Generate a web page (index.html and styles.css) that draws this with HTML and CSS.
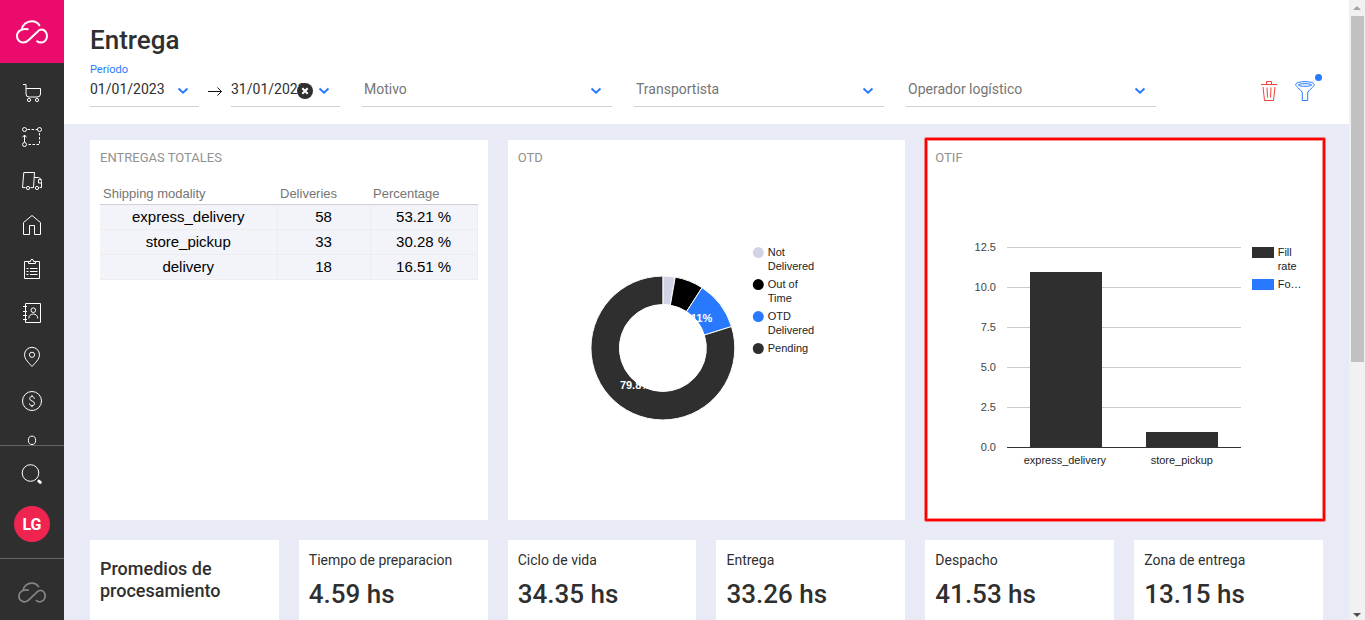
FILE: index.html
```html
<!DOCTYPE html>
<html lang="es">
<head>
<meta charset="utf-8">
<title>Entrega</title>
<meta name="viewport" content="width=device-width, initial-scale=1">
<link rel="stylesheet" href="styles.css">
</head>
<body>
<svg class="defs" aria-hidden="true">
  <symbol id="cloud" viewBox="0 0 32 24">
    <path d="M11.7 9.2C5 8.2 1 11.8 1 16.2c0 3.600 2.800 6.400 6.400 6.400 2.500 0 3.900-1 5.600-2.800L21 12.200c1.300-1.400 2.500-2.600 4.500-2.600 3.200 0 5.500 2.900 5.500 6.400s-2.500 6.600-5.900 6.600c-1.600 0-3-.4-4-1.300"/>
    <path d="M5.800 9.600C6.400 4.600 10.800 1.200 15.800 1.200c3.200 0 6 1.400 7.600 4.100"/>
  </symbol>
  <symbol id="chevron" viewBox="0 0 12 8"><path d="M1.500 1.500 6 5.700l4.500-4.200"/></symbol>
</svg>

<aside class="sidebar">
  <a class="brand" href="#" aria-label="Inicio"><svg class="cloud"><use href="#cloud"/></svg></a>
  <nav class="nav">
    <a href="#" aria-label="Pedidos"><svg class="icon" viewBox="0 0 24 24"><path d="M3 3.500h3v9.500q0 3 3 3h8q3.500 0 3.500-3V7.500H6"/><circle cx="9" cy="19" r="1.600"/><circle cx="17" cy="19" r="1.600"/></svg></a>
    <a href="#" aria-label="Rutas"><svg class="icon" viewBox="0 0 24 24"><circle cx="4.500" cy="4.500" r="2"/><circle cx="19.500" cy="4.500" r="2"/><circle cx="4.500" cy="19.500" r="2"/><path d="M7.500 4.500h10M19.500 8v11.500H7.500" stroke-dasharray="2.500 1.500"/><path d="M4.500 17v-7M2.500 12.300l2-2.300 2 2.300"/></svg></a>
    <a href="#" aria-label="Transporte"><svg class="icon" viewBox="0 0 24 24"><path d="M5.500 18.600h-3L3.800 3.500h10.700l-1 15.100H10.500M14.200 8.500h4.300q2.700.5 3 4v6.100h-2M21.500 10.600h-3v3.400h3"/><circle cx="8" cy="19" r="1.600"/><circle cx="17" cy="19" r="1.600"/></svg></a>
    <a href="#" aria-label="Sucursales"><svg class="icon" viewBox="0 0 24 24"><path d="M3.500 9.500 12 2.500l8.500 7v12H14.500v-9h-5v9h-6z"/></svg></a>
    <a href="#" aria-label="Tareas"><svg class="icon" viewBox="0 0 24 24"><path d="M8.500 4.500h-4v17h15v-17h-4M8.500 6.500v-2h2q0-2.200 1.500-2.200t1.500 2.200h2v2zM6.500 11.500h2M6.500 14.500h2M6.500 17.500h2M10 11.500h7.500M10 14.500h7.500M10 17.500h7.500"/></svg></a>
    <a href="#" aria-label="Contactos"><svg class="icon" viewBox="0 0 24 24"><path d="M5.500 2.500h15v19h-15zM3 5.500h4M3 10.500h4M3 14.500h4M3 18.500h4M8.800 17.500c0-6 9-6 9 0"/><circle cx="13.300" cy="9.200" r="2.300"/></svg></a>
    <a href="#" aria-label="Ubicaciones"><svg class="icon" viewBox="0 0 24 24"><path d="M12 21.500C9 18 4.500 14.200 4.500 9.800a7.500 7.500 0 0 1 15 0c0 4.400-4.500 8.200-7.500 11.700z"/><circle cx="12" cy="9.800" r="2.600"/></svg></a>
    <a href="#" aria-label="Pagos"><svg class="icon" viewBox="0 0 24 24"><circle cx="12" cy="12" r="9.500"/><path d="M14.300 9.800c0-3-4.600-3-4.600-.2 0 2.800 4.800 2 4.800 4.900 0 2.900-5 2.900-5 0M12 6v2M12 16.200v2"/></svg></a>
    <a href="#" aria-label="Usuarios"><svg class="icon" viewBox="0 0 24 24"><ellipse cx="12" cy="7.300" rx="3.600" ry="4.200"/><path d="M4 21c0-9 16-9 16 0"/></svg></a>
  </nav>
  <div class="account">
    <button class="search" aria-label="Buscar"><svg class="icon" viewBox="0 0 24 24"><circle cx="10.500" cy="11" r="8.300"/><path class="handle" d="m18.800 19.200 1.500 1.200"/></svg></button>
    <button class="avatar">LG</button>
  </div>
  <div class="foot"><svg class="cloud cloud-small"><use href="#cloud"/></svg></div>
</aside>

<main class="main">
  <header class="header">
    <h1>Entrega</h1>
    <div class="filters">
      <div class="period">
        <label class="caption" for="from">Período</label>
        <div class="range">
          <div class="field date"><input id="from" type="text" value="01/01/2023"><svg class="chevron"><use href="#chevron"/></svg></div>
          <svg class="arrow" viewBox="0 0 16 12"><path d="M1 5.500h13.500M10.500 1.500l4 4-4 4"/></svg>
          <div class="field date"><input type="text" value="31/01/2023" aria-label="Hasta"><button class="clear" aria-label="Borrar fecha"><svg viewBox="0 0 16 16"><circle cx="8" cy="8" r="8"/><path d="m5.300 5.300 5.400 5.400M10.700 5.300l-5.400 5.400"/></svg></button><svg class="chevron"><use href="#chevron"/></svg></div>
        </div>
      </div>
      <div class="field"><select aria-label="Motivo"><option>Motivo</option></select><svg class="chevron"><use href="#chevron"/></svg></div>
      <div class="field"><select aria-label="Transportista"><option>Transportista</option></select><svg class="chevron"><use href="#chevron"/></svg></div>
      <div class="field"><select aria-label="Operador logístico"><option>Operador logístico</option></select><svg class="chevron"><use href="#chevron"/></svg></div>
      <div class="actions">
        <button class="trash" aria-label="Limpiar filtros"><svg viewBox="0 0 20 22"><path d="M2 4.500h16M7.500 4V1.500h5V4M4 7l1.500 13.500h9L16 7M8 7.500l.5 10M12 7.500l-.5 10"/></svg></button>
        <button class="funnel" aria-label="Filtrar"><svg viewBox="0 0 20 22"><path d="M.7 4.500C.7 .7 19.300 .7 19.300 4.500c0 2.500-6.600 6-6.600 8.500v7.500H7.300V13C7.300 10.500 .7 7 .7 4.500z"/><ellipse cx="10" cy="5" rx="6.800" ry="1.300"/></svg><span class="dot"></span></button>
      </div>
    </div>
  </header>

  <div class="board">
    <section class="charts">
      <article class="card">
        <h2>ENTREGAS TOTALES</h2>
        <table class="totals">
          <colgroup><col class="c-name"><col class="c-count"><col></colgroup>
          <thead><tr><th>Shipping modality</th><th>Deliveries</th><th>Percentage</th></tr></thead>
          <tbody>
            <tr><td>express_delivery</td><td>58</td><td>53.21 %</td></tr>
            <tr><td>store_pickup</td><td>33</td><td>30.28 %</td></tr>
            <tr><td>delivery</td><td>18</td><td>16.51 %</td></tr>
          </tbody>
        </table>
      </article>

      <article class="card">
        <h2>OTD</h2>
        <svg class="chart" viewBox="0 0 378 340" width="378" height="340" role="img" aria-label="OTD">
          <g transform="translate(145 178)" stroke="#fff">
            <path fill="#d1d4e6" d="M0-72A72 72 0 0 1 12.390-70.930L7.490-42.850A43.500 43.500 0 0 0 0-43.500z"/>
            <path fill="#000" d="M12.390-70.930A72 72 0 0 1 39.250-60.360L23.710-36.470A43.500 43.500 0 0 0 7.490-42.850z"/>
            <path fill="#2979ff" d="M39.250-60.360A72 72 0 0 1 68.720-21.460L41.520-12.970A43.500 43.500 0 0 0 23.710-36.470z"/>
            <path fill="#2f2f2f" d="M68.720-21.460A72 72 0 1 1 0-72V-43.500A43.500 43.500 0 1 0 41.520-12.970z"/>
          </g>
          <g class="slice-label"><text x="173" y="152">11%</text><text x="102" y="219">79.8%</text></g>
          <circle cx="240.500" cy="82.500" r="5.500" fill="#d1d4e6"/>
          <circle cx="240.500" cy="114.500" r="5.500" fill="#000"/>
          <circle cx="240.500" cy="146.500" r="5.500" fill="#2979ff"/>
          <circle cx="240.500" cy="178.500" r="5.500" fill="#2f2f2f"/>
          <g class="legend">
            <text x="250" y="86">Not</text><text x="250" y="100">Delivered</text>
            <text x="250" y="118">Out of</text><text x="250" y="132">Time</text>
            <text x="250" y="150">OTD</text><text x="250" y="164">Delivered</text>
            <text x="250" y="182">Pending</text>
          </g>
        </svg>
      </article>

      <article class="card highlighted">
        <h2>OTIF</h2>
        <svg class="chart" viewBox="0 0 378 340" width="378" height="340" role="img" aria-label="OTIF">
          <g shape-rendering="crispEdges">
            <path stroke="#ccc" d="M72 77.500h234M72 117.500h234M72 157.500h234M72 197.500h234M72 237.500h234"/>
            <path fill="#2f2f2f" d="M95 102h72v175H95zM211 262h72v15h-72zM317 77h22v11h-22z"/>
            <path stroke="#333" d="M72 277.500h234"/>
            <path fill="#2979ff" d="M317 109h22v11h-22z"/>
          </g>
          <g class="axis">
            <text x="61" y="81">12.5</text><text x="61" y="121">10.0</text><text x="61" y="161">7.5</text>
            <text x="61" y="201">5.0</text><text x="61" y="241">2.5</text><text x="61" y="281">0.0</text>
          </g>
          <g class="legend names"><text x="130" y="294">express_delivery</text><text x="247" y="294">store_pickup</text></g>
          <g class="legend"><text x="343" y="86">Fill</text><text x="343" y="100">rate</text><text x="343" y="118">Fo…</text></g>
        </svg>
      </article>
    </section>

    <section class="kpis">
      <article class="card kpi-title"><h3>Promedios de procesamiento</h3></article>
      <article class="card kpi"><p>Tiempo de preparacion</p><strong>4.59 hs</strong></article>
      <article class="card kpi"><p>Ciclo de vida</p><strong>34.35 hs</strong></article>
      <article class="card kpi"><p>Entrega</p><strong>33.26 hs</strong></article>
      <article class="card kpi"><p>Despacho</p><strong>41.53 hs</strong></article>
      <article class="card kpi"><p>Zona de entrega</p><strong>13.15 hs</strong></article>
    </section>
  </div>
</main>

<div class="scrollbar" aria-hidden="true">
  <svg viewBox="0 0 16 16"><path fill="#a3a3a3" d="m4 10 4-4 4 4z"/></svg>
  <div class="thumb"></div>
  <svg viewBox="0 0 16 16"><path fill="#505050" d="m4 9 4 4 4-4z"/></svg>
</div>
</body>
</html>
```
FILE: styles.css
```css
* { box-sizing: border-box; }
body {
  margin: 0;
  height: 100vh;
  display: flex;
  overflow: hidden;
  background: #e8eaf6;
  color: #2f2f2f;
  font-family: Roboto, sans-serif;
  font-size: 14px;
}
h1, h2, h3, p { margin: 0; }
button { border: 0; padding: 0; background: none; font: inherit; }
svg { fill: none; display: block; }
.defs { position: absolute; width: 0; height: 0; }

/* Sidebar */
.sidebar {
  width: 64px;
  flex: none;
  display: flex;
  flex-direction: column;
  background: #2f2f2f;
}
.brand {
  height: 63px;
  flex: none;
  display: grid;
  place-items: center;
  background: #ea0b6d;
}
.cloud { width: 32px; height: 24px; stroke: #fff; stroke-width: 2; stroke-linecap: round; }
.nav { flex: 1; min-height: 0; padding-top: 8px; overflow: hidden; }
.nav a { height: 44px; display: grid; place-items: center; }
.icon { width: 24px; height: 24px; stroke: #fff; stroke-width: 1; }
.account {
  height: 113px;
  flex: none;
  display: flex;
  flex-direction: column;
  align-items: center;
  gap: 20px;
  padding-top: 16px;
  border-top: 1px solid #666;
}
.handle { stroke-width: 3; stroke-linecap: round; }
.avatar {
  width: 36px;
  height: 36px;
  border-radius: 50%;
  background: #ef2450;
  color: #fff;
  font-size: 16px;
  font-weight: 700;
}
.foot {
  height: 62px;
  flex: none;
  display: grid;
  place-items: center;
  padding-top: 6px;
  border-top: 1px solid #666;
}
.cloud-small { width: 28px; height: 21px; stroke: #858585; }

/* Header */
.main { flex: 1; min-width: 0; overflow: hidden; }
.header { height: 124px; padding: 24px 34px 0 26px; background: #fff; }
h1 { font-size: 26px; line-height: 32px; font-weight: 500; }
.filters { display: flex; align-items: flex-end; gap: 22px; padding-top: 7px; }
.caption { display: block; font-size: 11px; line-height: 13px; color: #2979ff; }
.range { display: flex; align-items: center; }
.field {
  position: relative;
  width: 250px;
  height: 31px;
  border-bottom: 1px solid #d1d1d1;
}
.date { width: 109px; }
.field input, .field select {
  width: 100%;
  height: 26px;
  border: 0;
  padding: 0;
  background: none;
  color: #2f2f2f;
  font: inherit;
  outline: 0;
}
.field select { appearance: none; padding-left: 2px; color: #757575; }
.chevron {
  position: absolute;
  right: 10px;
  top: 11px;
  width: 12px;
  height: 8px;
  stroke: #2979ff;
  stroke-width: 2;
  pointer-events: none;
}
.arrow { width: 16px; height: 12px; margin: 0 8px; stroke: #111; }
.clear { position: absolute; left: 66px; top: 7px; }
.clear svg { width: 16px; height: 16px; }
.clear circle { fill: #2f2f2f; }
.clear path { stroke: #fff; stroke-width: 2; }
.actions { display: flex; gap: 16px; margin-left: auto; padding-bottom: 5px; }
.actions button { position: relative; }
.actions svg { width: 20px; height: 22px; }
.trash { stroke: #f44336; }
.funnel { stroke: #2979ff; }
.dot {
  position: absolute;
  top: -6px;
  right: -7px;
  width: 7px;
  height: 7px;
  border-radius: 50%;
  background: #2979ff;
}

/* Board */
.board { padding: 16px 26px 0; display: grid; gap: 20px; }
.charts { display: grid; grid-template-columns: repeat(3, 1fr); gap: 20px; }
.kpis { display: grid; grid-template-columns: repeat(6, 1fr); gap: 20px; }
.card { min-width: 0; padding: 10px; background: #fff; }
.charts .card { min-height: 380px; }
h2 { font-size: 13px; line-height: 16px; font-weight: 400; color: #919191; }
.chart { margin: 4px auto 0; max-width: 100%; }
.chart text { font-family: "Liberation Sans", Arial, sans-serif; font-size: 11px; }
.legend { fill: #222; }
.names { text-anchor: middle; }
.axis { fill: #444; text-anchor: end; }
.slice-label { fill: #fff; font-weight: 700; }
.highlighted { position: relative; }
.highlighted::after {
  content: "";
  position: absolute;
  inset: -2px -2px -1px 0;
  border: 2px solid #f00;
  border-radius: 1px;
  box-shadow: 0 0 0 1px rgba(255, 0, 0, .45), inset 0 0 0 1px rgba(255, 0, 0, .45);
  pointer-events: none;
}

.totals {
  width: 100%;
  margin-top: 18px;
  border-collapse: collapse;
  table-layout: fixed;
  font-family: "Liberation Sans", Arial, sans-serif;
}
.c-name { width: 177px; }
.c-count { width: 93px; }
.totals th {
  height: 20px;
  padding: 1px 3px 0;
  border-bottom: 1px solid #cfd0d6;
  color: #757575;
  font-size: 13px;
  font-weight: 400;
  line-height: 18px;
  text-align: left;
}
.totals td {
  height: 25px;
  padding: 0;
  border: 1px solid #ededed;
  border-left: 0;
  background: #f3f4fa;
  color: #000;
  font-size: 15px;
  line-height: 24px;
  text-align: center;
}
.totals tbody tr:first-child td { border-top: 0; }

.kpi p { line-height: 20px; }
.kpi strong { display: block; margin-top: 8px; font-size: 26px; line-height: 32px; font-weight: 500; }
.kpi-title { padding-top: 18px; }
h3 { font-size: 18px; line-height: 22px; font-weight: 500; }

/* Scroll bar */
.scrollbar { width: 16px; flex: none; display: flex; flex-direction: column; background: #f1f1f1; }
.scrollbar svg { width: 16px; height: 16px; flex: none; }
.scrollbar svg:last-child { margin-top: auto; }
.thumb { height: 346px; margin: 0 1px 0 2px; background: #c1c1c1; }
```
